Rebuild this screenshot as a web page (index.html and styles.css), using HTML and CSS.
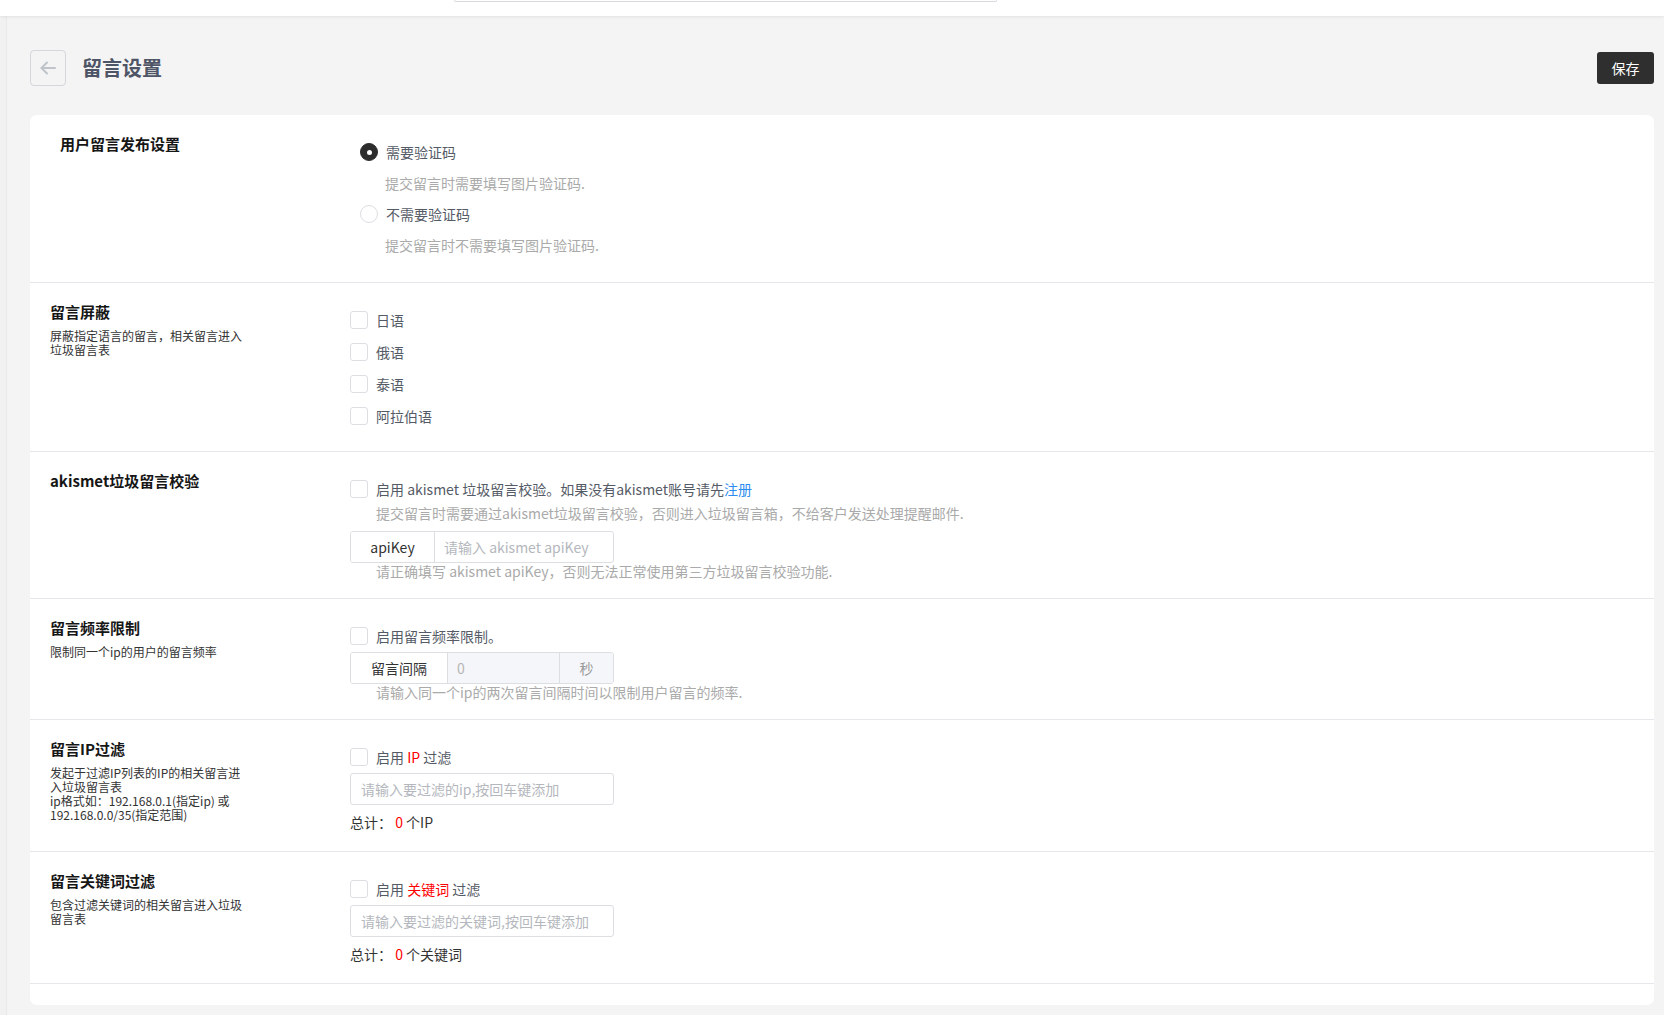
FILE: index.html
```html
<!DOCTYPE html>
<html lang="zh-CN">
<head>
<meta charset="utf-8">
<title>留言设置</title>
<link rel="stylesheet" href="styles.css">
</head>
<body>
<div class="topbar"><div class="top-search"></div></div>
<div class="layout">
  <div class="side-strip"></div>
  <div class="main">
    <div class="page-header">
      <div class="header-left">
        <button class="back-btn" type="button" aria-label="返回">
          <svg width="18" height="18" viewBox="0 0 18 18" fill="none" stroke="#bfc3ca" stroke-width="2" stroke-linecap="round" stroke-linejoin="round"><path d="M16 9H2.5"/><path d="M8 3.5L2.5 9 8 14.5"/></svg>
        </button>
        <h1 class="page-title">留言设置</h1>
      </div>
      <button class="save-btn" type="button">保存</button>
    </div>

    <div class="card">
      <section class="setting setting-first">
        <div class="setting-label">
          <div class="setting-title">用户留言发布设置</div>
        </div>
        <div class="setting-body">
          <label class="opt-row"><span class="radio radio-on"></span><span class="opt-text">需要验证码</span></label>
          <div class="hint-row">提交留言时需要填写图片验证码.</div>
          <label class="opt-row"><span class="radio"></span><span class="opt-text">不需要验证码</span></label>
          <div class="hint-row">提交留言时不需要填写图片验证码.</div>
        </div>
      </section>

      <section class="setting">
        <div class="setting-label">
          <div class="setting-title">留言屏蔽</div>
          <div class="setting-desc">屏蔽指定语言的留言，相关留言进入垃圾留言表</div>
        </div>
        <div class="setting-body">
          <label class="opt-row"><span class="checkbox"></span><span class="opt-text">日语</span></label>
          <label class="opt-row"><span class="checkbox"></span><span class="opt-text">俄语</span></label>
          <label class="opt-row"><span class="checkbox"></span><span class="opt-text">泰语</span></label>
          <label class="opt-row"><span class="checkbox"></span><span class="opt-text">阿拉伯语</span></label>
        </div>
      </section>

      <section class="setting">
        <div class="setting-label">
          <div class="setting-title">akismet垃圾留言校验</div>
        </div>
        <div class="setting-body">
          <label class="opt-row"><span class="checkbox"></span><span class="opt-text">启用 akismet 垃圾留言校验。如果没有akismet账号请先<a class="link">注册</a></span></label>
          <div class="hint">提交留言时需要通过akismet垃圾留言校验，否则进入垃圾留言箱，不给客户发送处理提醒邮件.</div>
          <div class="input-group gap-top">
            <span class="addon addon-api">apiKey</span>
            <span class="field placeholder">请输入 akismet apiKey</span>
          </div>
          <div class="hint">请正确填写 akismet apiKey，否则无法正常使用第三方垃圾留言校验功能.</div>
        </div>
      </section>

      <section class="setting">
        <div class="setting-label">
          <div class="setting-title">留言频率限制</div>
          <div class="setting-desc">限制同一个ip的用户的留言频率</div>
        </div>
        <div class="setting-body">
          <label class="opt-row"><span class="checkbox"></span><span class="opt-text">启用留言频率限制。</span></label>
          <div class="input-group">
            <span class="addon addon-interval">留言间隔</span>
            <span class="field field-disabled">0</span>
            <span class="addon addon-gray addon-sec">秒</span>
          </div>
          <div class="hint">请输入同一个ip的两次留言间隔时间以限制用户留言的频率.</div>
        </div>
      </section>

      <section class="setting">
        <div class="setting-label">
          <div class="setting-title">留言IP过滤</div>
          <div class="setting-desc">发起于过滤IP列表的IP的相关留言进入垃圾留言表<br>ip格式如：192.168.0.1(指定ip) 或<br>192.168.0.0/35(指定范围)</div>
        </div>
        <div class="setting-body">
          <label class="opt-row"><span class="checkbox"></span><span class="opt-text">启用 <em class="red">IP</em> 过滤</span></label>
          <div class="input-box placeholder">请输入要过滤的ip,按回车键添加</div>
          <div class="total">总计：&nbsp;<em class="red">0</em> 个IP</div>
        </div>
      </section>

      <section class="setting">
        <div class="setting-label">
          <div class="setting-title">留言关键词过滤</div>
          <div class="setting-desc">包含过滤关键词的相关留言进入垃圾留言表</div>
        </div>
        <div class="setting-body">
          <label class="opt-row"><span class="checkbox"></span><span class="opt-text">启用 <em class="red">关键词</em> 过滤</span></label>
          <div class="input-box placeholder">请输入要过滤的关键词,按回车键添加</div>
          <div class="total">总计：&nbsp;<em class="red">0</em> 个关键词</div>
        </div>
      </section>
    </div>
  </div>
</div>
</body>
</html>
```

FILE: styles.css
```css
* { box-sizing: border-box; }

html, body {
  margin: 0;
  padding: 0;
  height: 100%;
}

body {
  background: #f4f4f4;
  font-family: "Noto Sans CJK SC", "Noto Sans", "Liberation Sans", sans-serif;
  font-size: 14px;
  color: #515a6e;
  overflow: hidden;
}

.topbar {
  height: 16px;
  background: #fff;
  box-shadow: 0 1px 3px rgba(0, 0, 0, 0.08);
  position: relative;
  z-index: 2;
}

.top-search {
  margin-left: 454px;
  width: 543px;
  height: 2px;
  border: 1px solid #d7d9de;
  border-top: none;
  border-radius: 0 0 3px 3px;
}

.layout {
  display: flex;
  height: calc(100% - 16px);
}

.side-strip {
  width: 7px;
  flex: none;
  background: #f1f1f1;
  border-right: 1px solid #e9e9e9;
}

.main {
  flex: 1;
  padding: 34px 10px 10px 23px;
}

.page-header {
  display: flex;
  align-items: center;
  justify-content: space-between;
  height: 36px;
  margin-bottom: 29px;
}

.header-left {
  display: flex;
  align-items: center;
  gap: 16px;
}

.back-btn {
  width: 36px;
  height: 36px;
  padding: 0;
  display: flex;
  align-items: center;
  justify-content: center;
  background: transparent;
  border: 1px solid #d4d6db;
  border-radius: 4px;
}

.page-title {
  margin: 0;
  font-size: 20px;
  font-weight: 700;
  color: #4e5566;
  line-height: 28px;
}

.save-btn {
  width: 57px;
  height: 32px;
  padding: 0;
  border: none;
  border-radius: 3px;
  background: #2f2f2f;
  color: #fff;
  font-family: inherit;
  font-size: 14px;
}

.card {
  background: #fff;
  border-radius: 7px;
  padding-bottom: 21px;
}

.setting {
  display: grid;
  grid-template-columns: 300px 1fr;
  padding: 21px 20px 19px 20px;
  border-bottom: 1px solid #e6e7ea;
}

.setting-first {
  padding-left: 30px;
  padding-bottom: 22px;
}

.setting-title {
  margin-top: -2px;
  font-size: 15px;
  font-weight: 700;
  color: #161616;
  line-height: 20px;
}

.setting-desc {
  margin-top: 7px;
  max-width: 200px;
  font-size: 12px;
  line-height: 14px;
  color: #333;
}

.setting-body {
  display: flex;
  flex-direction: column;
  align-items: flex-start;
}

.opt-row {
  height: 32px;
  display: flex;
  align-items: center;
  gap: 8px;
}

.opt-text {
  color: #555b66;
  line-height: 20px;
}

.checkbox {
  width: 18px;
  height: 18px;
  border: 1px solid #dcdee2;
  border-radius: 3px;
  background: #fff;
  flex: none;
}

.radio {
  width: 18px;
  height: 18px;
  border: 1px solid #dcdee2;
  border-radius: 50%;
  background: #fff;
  flex: none;
  display: flex;
  align-items: center;
  justify-content: center;
}

.radio-on {
  background: #2d2d2d;
  border-color: #2d2d2d;
}

.radio-on::after {
  content: "";
  width: 5px;
  height: 5px;
  border-radius: 50%;
  background: #fff;
}

.hint-row {
  height: 30px;
  display: flex;
  align-items: center;
  padding-left: 25px;
  color: #aaa;
}

.hint {
  padding-left: 26px;
  line-height: 16px;
  color: #aaa;
}

.link {
  color: #2d8cf0;
}

.red {
  font-style: normal;
  color: #f00;
}

.input-group {
  display: flex;
  width: 264px;
  height: 32px;
  border: 1px solid #dcdee2;
  border-radius: 3px;
  overflow: hidden;
}

.gap-top {
  margin-top: 10px;
}

.addon {
  flex: none;
  display: flex;
  align-items: center;
  justify-content: center;
  background: #fff;
  color: #333;
  border-right: 1px solid #dcdee2;
}

.addon-api { width: 84px; }
.addon-interval { width: 97px; }

.addon-gray {
  background: #f5f6f9;
  color: #999;
  border-right: none;
  border-left: 1px solid #dcdee2;
}

.addon-sec { width: 54px; }

.field {
  flex: 1;
  display: flex;
  align-items: center;
  padding: 0 9px;
  min-width: 0;
}

.field-disabled {
  background: #f5f6f9;
  color: #b5b5b5;
}

.placeholder {
  color: #b4b7bd;
}

.input-box {
  width: 264px;
  height: 32px;
  display: flex;
  align-items: center;
  padding: 0 10px;
  border: 1px solid #dcdee2;
  border-radius: 3px;
}

.total {
  margin-top: 7px;
  line-height: 20px;
  color: #333;
}
```
